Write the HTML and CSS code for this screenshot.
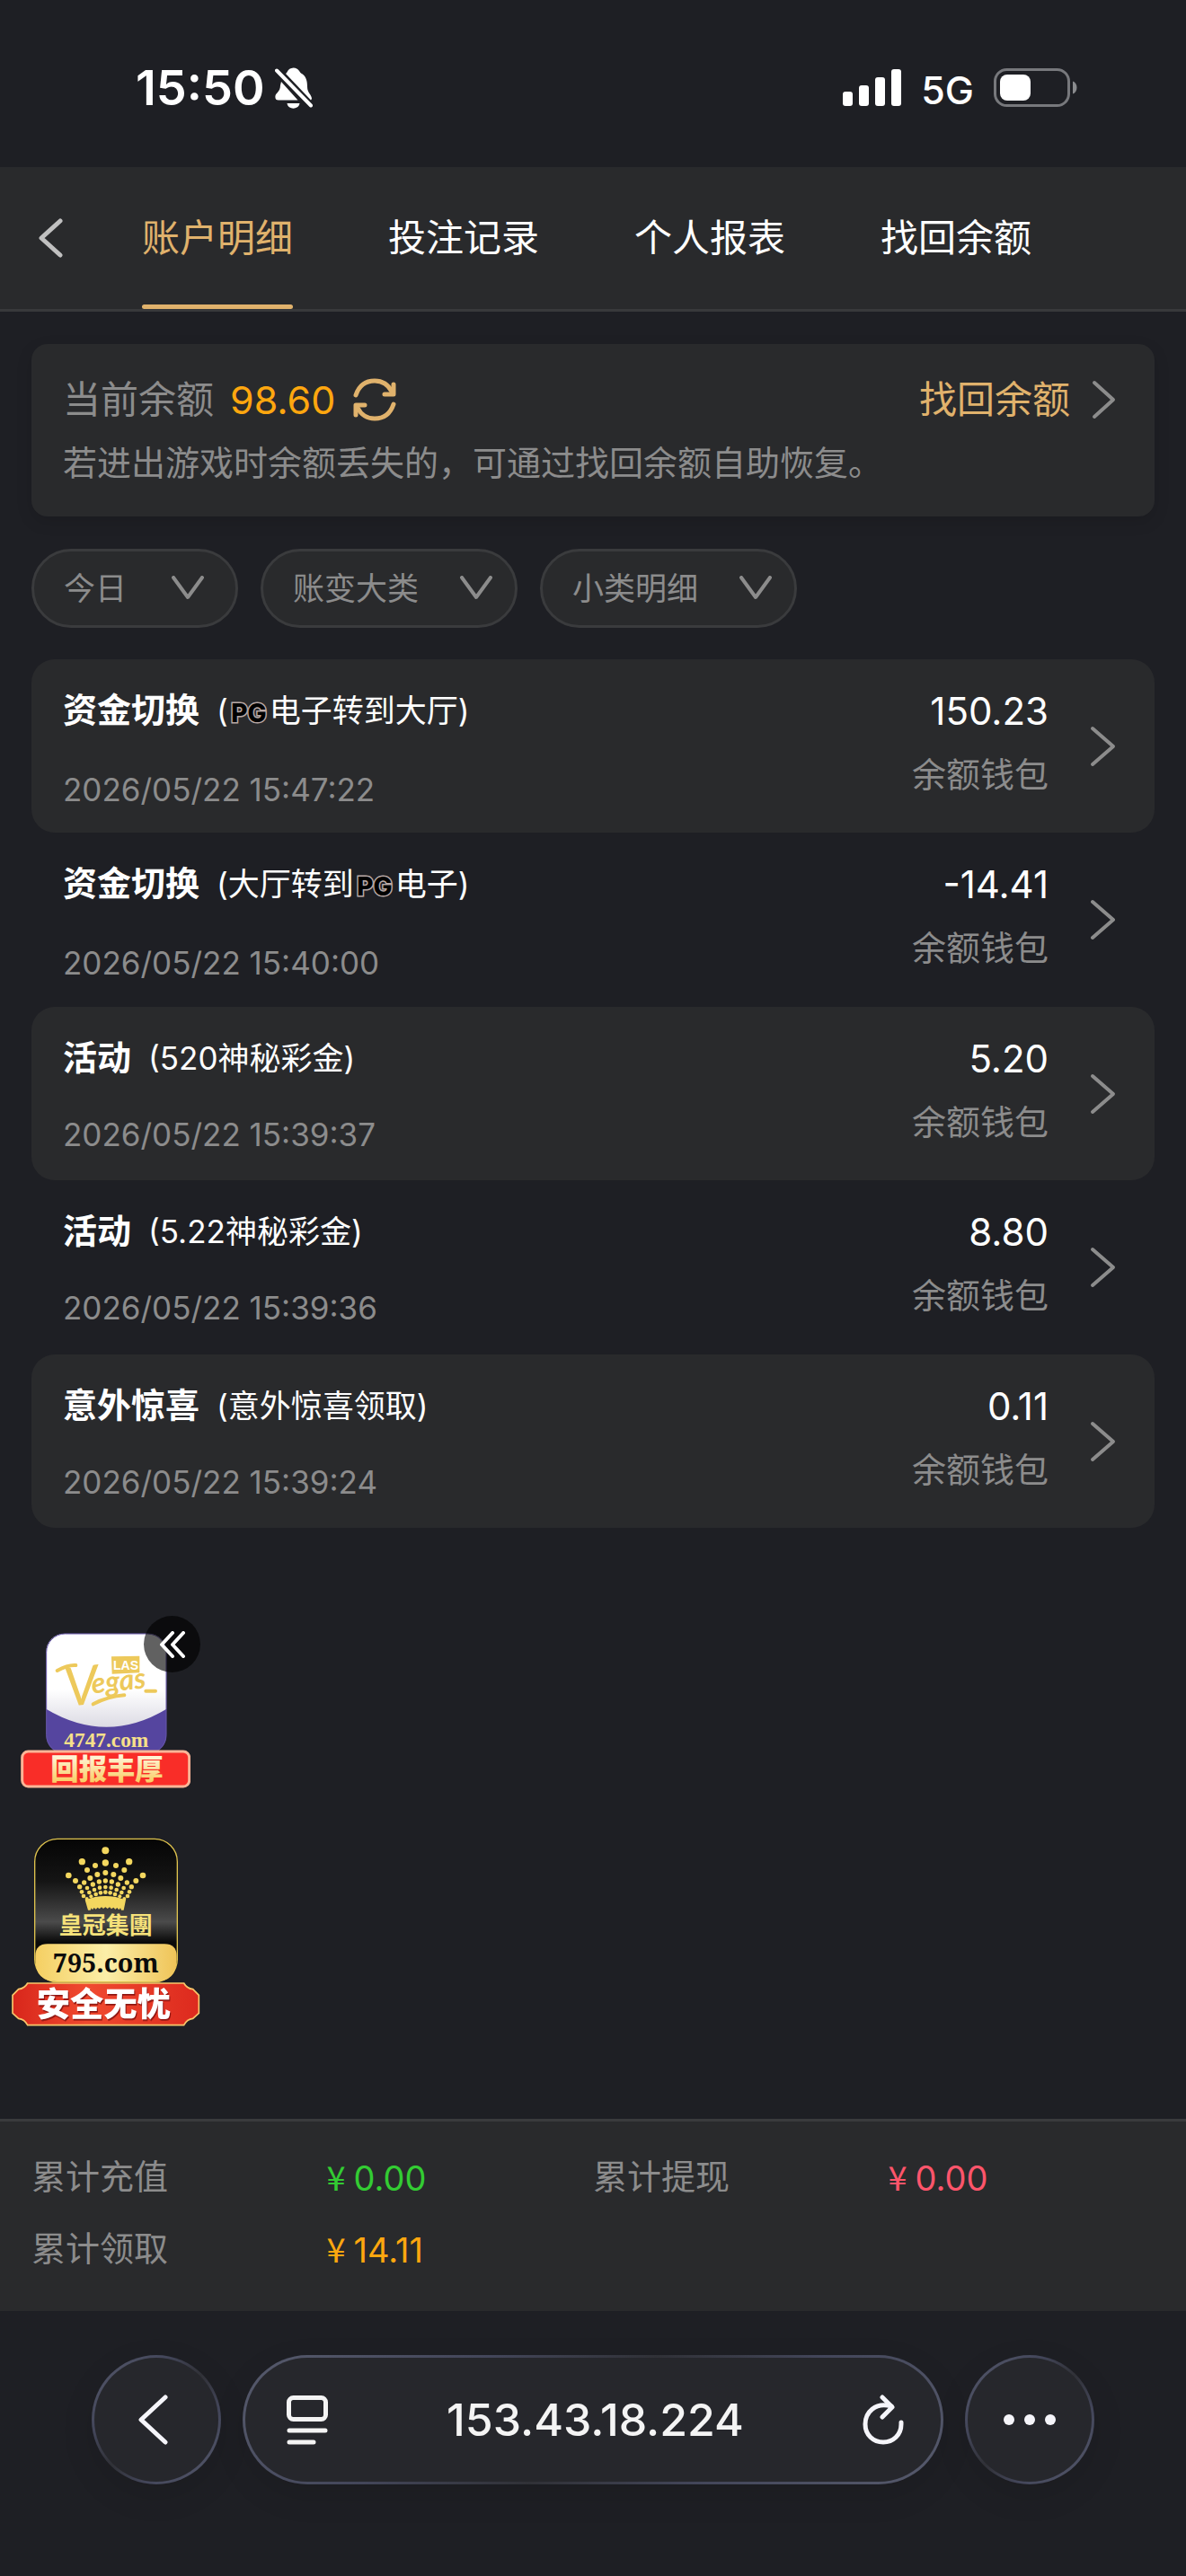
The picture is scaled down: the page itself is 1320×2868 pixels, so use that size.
FILE: index.html
```html
<!DOCTYPE html>
<html lang="zh-CN">
<head>
<meta charset="utf-8">
<meta name="viewport" content="width=device-width, initial-scale=1">
<title>账户明细</title>
<link rel="stylesheet" href="styles.css">
</head>
<body>
<div class="status">
  <span class="status-time">15:50</span>
  <svg class="status-bell" width="42" height="46" viewBox="0 0 42 46" aria-hidden="true">
    <path fill="#fff" d="M12 7c2-1 2-6 8.500-6.500C27 1 27 5 29 6.500c6 3 7 9 7 15 0 7 5 9 5 13.500l-1 1.500zM7 16l18.500 20.500H4c-3 0-4-2-3.500-5C1.500 28 6 27 6 20zM13.500 40h14c-1 7.500-13 7.500-14 0z"/>
    <path d="M2 3.500l38 39" stroke="#fff" stroke-width="4" stroke-linecap="round"/>
  </svg>
  <svg class="status-signal" width="66" height="42" viewBox="0 0 66 42" fill="#fff" aria-hidden="true">
    <rect x="0" y="25" width="11" height="16" rx="3"/><rect x="18" y="18" width="11" height="23" rx="3"/><rect x="36" y="9" width="11" height="32" rx="3"/><rect x="54" y="0" width="11" height="41" rx="3"/>
  </svg>
  <span class="status-net">5G</span>
  <svg width="94" height="44" viewBox="0 0 94 44" aria-hidden="true">
    <rect x="1.500" y="1.500" width="82" height="40" rx="13" fill="none" stroke="#77787c" stroke-width="3"/>
    <rect x="7" y="7" width="34" height="29" rx="8" fill="#fff"/>
    <path d="M88 14.500c6 2 6 12 0 14z" fill="#8a8b8e"/>
  </svg>
</div>

<header class="header">
  <a class="back" href="#" aria-label="返回"><svg width="28" height="44" viewBox="0 0 28 44"><path d="M25 3L4 22l21 19" fill="none" stroke="#c0c0c0" stroke-width="5" stroke-linecap="round" stroke-linejoin="round"/></svg></a>
  <nav class="tabs">
    <a class="tab tab-active" href="#">账户明细</a>
    <a class="tab" href="#">投注记录</a>
    <a class="tab" href="#">个人报表</a>
    <a class="tab" href="#">找回余额</a>
  </nav>
</header>

<main class="content">
  <section class="balance">
    <div class="balance-row">
      <span class="balance-label">当前余额</span>
      <span class="balance-value">98.60</span>
      <button class="refresh" type="button" aria-label="刷新">
        <svg width="48" height="48" viewBox="0 0 48 48" fill="none" stroke="#e0b26c" stroke-width="5" stroke-linecap="round" stroke-linejoin="round"><path d="M3 19C7 7 15 3 24 3c8 0 15 4 19 12"/><path d="M45 7v11H35"/><path d="M45 29c-4 12-12 16-21 16-8 0-15-4-19-12"/><path d="M3 41V30h10"/></svg>
      </button>
      <a class="recover" href="#">找回余额
        <svg width="28" height="44" viewBox="0 0 28 44"><path d="M3 3l21 19L3 41" fill="none" stroke="#8c8c8c" stroke-width="4" stroke-linecap="round" stroke-linejoin="round"/></svg>
      </a>
    </div>
    <p class="balance-note">若进出游戏时余额丢失的，可通过找回余额自助恢复。</p>
  </section>

  <form class="filters">
    <div class="filter filter-date">
      <select aria-label="日期"><option>今日</option></select>
      <svg width="36" height="28" viewBox="0 0 36 28"><path d="M2 2l16 22L34 2"/></svg>
    </div>
    <div class="filter">
      <select aria-label="大类"><option>账变大类</option></select>
      <svg width="36" height="28" viewBox="0 0 36 28"><path d="M2 2l16 22L34 2"/></svg>
    </div>
    <div class="filter">
      <select aria-label="小类"><option>小类明细</option></select>
      <svg width="36" height="28" viewBox="0 0 36 28"><path d="M2 2l16 22L34 2"/></svg>
    </div>
  </form>

  <ul class="records">
    <li><a class="record" href="#">
      <span class="record-main"><span class="record-title"><b>资金切换</b><span>(<i class="pg">PG</i>电子转到大厅)</span></span><time>2026/05/22 15:47:22</time></span>
      <span class="record-side"><span class="amount">150.23</span><span class="wallet">余额钱包</span></span>
      <svg class="go" width="30" height="46" viewBox="0 0 30 46"><path d="M3 3l23 20L3 43"/></svg>
    </a></li>
    <li><a class="record" href="#">
      <span class="record-main"><span class="record-title"><b>资金切换</b><span>(大厅转到<i class="pg">PG</i>电子)</span></span><time>2026/05/22 15:40:00</time></span>
      <span class="record-side"><span class="amount">-14.41</span><span class="wallet">余额钱包</span></span>
      <svg class="go" width="30" height="46" viewBox="0 0 30 46"><path d="M3 3l23 20L3 43"/></svg>
    </a></li>
    <li><a class="record" href="#">
      <span class="record-main"><span class="record-title"><b>活动</b><span>(520神秘彩金)</span></span><time>2026/05/22 15:39:37</time></span>
      <span class="record-side"><span class="amount">5.20</span><span class="wallet">余额钱包</span></span>
      <svg class="go" width="30" height="46" viewBox="0 0 30 46"><path d="M3 3l23 20L3 43"/></svg>
    </a></li>
    <li><a class="record" href="#">
      <span class="record-main"><span class="record-title"><b>活动</b><span>(5.22神秘彩金)</span></span><time>2026/05/22 15:39:36</time></span>
      <span class="record-side"><span class="amount">8.80</span><span class="wallet">余额钱包</span></span>
      <svg class="go" width="30" height="46" viewBox="0 0 30 46"><path d="M3 3l23 20L3 43"/></svg>
    </a></li>
    <li><a class="record" href="#">
      <span class="record-main"><span class="record-title"><b>意外惊喜</b><span>(意外惊喜领取)</span></span><time>2026/05/22 15:39:24</time></span>
      <span class="record-side"><span class="amount">0.11</span><span class="wallet">余额钱包</span></span>
      <svg class="go" width="30" height="46" viewBox="0 0 30 46"><path d="M3 3l23 20L3 43"/></svg>
    </a></li>
  </ul>

  <aside class="promos">
    <a class="promo" href="#">
      <svg width="189" height="173" viewBox="66 116 567 519">
        <defs>
          <linearGradient id="face" x1="0" y1="0" x2="0" y2="1"><stop offset=".6" stop-color="#fff"/><stop offset="1" stop-color="#dcdbe4"/></linearGradient>
          <linearGradient id="cream" x1="0" y1="0" x2="0" y2="1"><stop offset=".2" stop-color="#fff6dc"/><stop offset="1" stop-color="#f8c54e"/></linearGradient>
          <clipPath id="tile"><rect x="151" y="118" width="402" height="402" rx="62"/></clipPath>
        </defs>
        <g clip-path="url(#tile)">
          <rect x="151" y="118" width="402" height="402" fill="#55459f"/>
          <path d="M151 118h402v252q-200 120-402 0z" fill="url(#face)"/>
        </g>
        <rect x="152" y="119" width="400" height="400" rx="62" fill="none" stroke="#6657a8" stroke-width="3"/>
        <path d="M369 195l94-2v56l-92 4z" fill="#edc95b"/>
        <text class="art-las" x="417" y="239" text-anchor="middle">LAS</text>
        <path d="M188 242q36-20 62-18M308 354q50-26 104-30M484 310h32" fill="none" stroke="#edc95b" stroke-width="12" stroke-linecap="round"/>
        <text class="art-vegas" x="218" y="362" transform="rotate(-6 218 362)"><tspan class="art-initial">V</tspan><tspan dy="-34" dx="-22">egas</tspan></text>
        <text class="art-domain" x="352" y="497" text-anchor="middle">4747.com</text>
        <rect x="71" y="512" width="558" height="117" rx="20" fill="#f92d28" stroke="#fbb597" stroke-width="9"/>
        <text class="art-banner" x="354" y="605" text-anchor="middle" fill="url(#cream)">回报丰厚</text>
      </svg>
    </a>
    <button class="collapse" type="button" aria-label="收起"><svg width="30" height="30" viewBox="0 0 30 30"><path d="M15 2L3 15l12 13M27 2L15 15l12 13" fill="none" stroke="#fff" stroke-width="4" stroke-linecap="round" stroke-linejoin="round"/></svg></button>
    <a class="promo" href="#">
      <svg width="211" height="210" viewBox="36 50 633 630">
        <defs>
          <linearGradient id="night" x1="0" y1="0" x2="0" y2="1"><stop offset="0" stop-color="#050505"/><stop offset=".3" stop-color="#151515"/><stop offset=".58" stop-color="#4b4b4b"/><stop offset=".72" stop-color="#0a0a0a"/></linearGradient>
          <linearGradient id="plate" x1="0" y1="0" x2="1" y2="0"><stop offset="0" stop-color="#f5cf62"/><stop offset=".5" stop-color="#fbeea8"/><stop offset="1" stop-color="#efc458"/></linearGradient>
          <linearGradient id="ribbon" x1="0" y1="0" x2="1" y2="0"><stop offset="0" stop-color="#d8261b"/><stop offset=".4" stop-color="#f04a30"/><stop offset="1" stop-color="#dd2a1e"/></linearGradient>
        </defs>
        <rect x="116" y="54" width="476" height="478" rx="76" fill="url(#night)" stroke="#dfc34e" stroke-width="4"/>
        <path d="M118 446q0-41 41-41h390q41 0 41 41v12q0 72-72 72H190q-72 0-72-72z" fill="url(#plate)"/>
        <g fill="#f3d75f">
          <circle cx="352" cy="93" r="12"/><circle cx="274" cy="130" r="11"/><circle cx="431" cy="130" r="11"/><circle cx="352" cy="134" r="11"/>
          <circle cx="318" cy="143" r="9"/><circle cx="387" cy="143" r="9"/><circle cx="291" cy="158" r="9"/><circle cx="415" cy="158" r="9"/>
          <circle cx="229" cy="176" r="10"/><circle cx="477" cy="176" r="10"/><circle cx="352" cy="167" r="9"/><circle cx="325" cy="173" r="9"/><circle cx="379" cy="173" r="9"/>
          <circle cx="301" cy="185" r="9"/><circle cx="403" cy="185" r="9"/><circle cx="252" cy="194" r="9"/><circle cx="454" cy="194" r="9"/>
          <circle cx="352" cy="194" r="8"/><circle cx="331" cy="197" r="8"/><circle cx="373" cy="197" r="8"/><circle cx="310" cy="206" r="8"/><circle cx="394" cy="206" r="8"/><circle cx="281" cy="200" r="8"/><circle cx="424" cy="200" r="8"/><circle cx="266" cy="214" r="8"/><circle cx="439" cy="214" r="8"/>
          <circle cx="352" cy="215" r="7"/><circle cx="333" cy="217" r="7"/><circle cx="371" cy="217" r="7"/><circle cx="315" cy="224" r="7"/><circle cx="389" cy="224" r="7"/><circle cx="291" cy="218" r="7"/><circle cx="413" cy="218" r="7"/><circle cx="273" cy="231" r="7"/><circle cx="432" cy="231" r="7"/><circle cx="298" cy="233" r="7"/><circle cx="406" cy="233" r="7"/>
          <circle cx="352" cy="232" r="7"/><circle cx="336" cy="234" r="7"/><circle cx="368" cy="234" r="7"/><circle cx="320" cy="239" r="7"/><circle cx="384" cy="239" r="7"/><circle cx="279" cy="245" r="7"/><circle cx="426" cy="245" r="7"/><circle cx="304" cy="246" r="6"/><circle cx="400" cy="246" r="6"/><circle cx="290" cy="254" r="6"/><circle cx="415" cy="254" r="6"/>
          <path d="M284 258q68-26 136 0l-7 34h-8l-3-7-5 6-6-7-6 5-6-6-7 5-6-6-7 5-7-5-7 5-6-5-7 6-6-5-6 6-6-5-5 7-4-6-3 7h-8z"/>
        </g>
        <text class="art-crown" x="353" y="371" text-anchor="middle">皇冠集團</text>
        <text class="art-address" x="353" y="499" text-anchor="middle">795.com</text>
        <path d="M92 536h522q10 18 30 20l20 20v60l-20 18q-20 2-30 22H92q-10-20-30-22l-20-18v-60l20-20q20-2 30-20z" fill="url(#ribbon)" stroke="#f8c66a" stroke-width="5"/>
        <text class="art-safe" x="346" y="647" text-anchor="middle">安全无忧</text>
      </svg>
    </a>
  </aside>
</main>

<dl class="summary">
  <dt>累计充值</dt><dd class="green"><span class="yen">¥</span>0.00</dd>
  <dt>累计提现</dt><dd class="red"><span class="yen">¥</span>0.00</dd>
  <dt>累计领取</dt><dd class="orange"><span class="yen">¥</span>14.11</dd>
</dl>

<footer class="browser">
  <button class="glass round" type="button" aria-label="后退"><svg width="42" height="56" viewBox="0 0 42 56"><path d="M31 3L4 28l27 25" fill="none" stroke="#f5f5fa" stroke-width="5" stroke-linecap="round" stroke-linejoin="round"/></svg></button>
  <div class="glass address">
    <button class="plain" type="button" aria-label="页面菜单"><svg width="46" height="56" viewBox="0 0 46 56"><rect x="2.500" y="3.500" width="41" height="24" rx="5" fill="none" stroke="#f4f4f4" stroke-width="5"/><path d="M3 40h40M3 53h27" stroke="#f4f4f4" stroke-width="5" stroke-linecap="round"/></svg></button>
    <input type="text" aria-label="网址" value="153.43.18.224">
    <button class="plain" type="button" aria-label="重新载入"><svg width="46" height="56" viewBox="0 0 46 56" fill="none" stroke="#f5f5fa" stroke-width="5" stroke-linecap="round" stroke-linejoin="round"><path d="M32 13C14 8 3 20 3 33c0 12 9 20 20 20s20-8 20-20v-2"/><path d="M22 3l11 11-11 11"/></svg></button>
  </div>
  <button class="glass round" type="button" aria-label="更多"><svg width="60" height="12" viewBox="0 0 60 12" fill="#f5f5fa"><circle cx="7" cy="6" r="6"/><circle cx="30" cy="6" r="6"/><circle cx="53" cy="6" r="6"/></svg></button>
</footer>
</body>
</html>
```
FILE: styles.css
```css
* { box-sizing: border-box; }

body {
  margin: 0;
  min-height: 100vh;
  display: flex;
  flex-direction: column;
  background: #1e1f24;
  color: #fff;
  font-family: Inter, "Noto Sans CJK SC", sans-serif;
  font-size: 38px;
  line-height: 56px;
}

a { color: inherit; text-decoration: none; }
button { padding: 0; border: 0; background: none; color: inherit; font: inherit; }
svg { display: block; flex: none; }

/* Phone status bar */
.status {
  display: flex;
  align-items: center;
  height: 186px;
  padding: 10px 120px 0 151px;
}
.status-time { font-size: 54px; font-weight: 600; }
.status-bell { margin-left: 11px; }
.status-signal { margin-left: auto; }
.status-net { margin: 4px 22px 0 21px; font-size: 43px; font-weight: 500; }

/* Header with tabs */
.header {
  display: flex;
  height: 161px;
  border-bottom: 3px solid #38393b;
  background: #292a2c;
}
.back { display: flex; align-items: center; width: 158px; padding-left: 42px; }
.tabs { display: flex; gap: 106px; font-size: 42px; }
.tab { display: flex; align-items: center; position: relative; }
.tab-active { color: #e0b26c; }
.tab-active::after {
  content: "";
  position: absolute;
  left: 0;
  right: 0;
  bottom: 0;
  height: 5px;
  border-radius: 3px;
  background: #e0b26c;
}

.content { flex: 1; padding: 36px 35px 0; }

/* Balance card */
.balance {
  height: 192px;
  padding: 34px 42px 0 35px;
  border-radius: 18px;
  background: #292a2c;
  box-shadow: 0 6px 18px rgba(0, 0, 0, .12);
}
.balance-row { display: flex; align-items: center; font-size: 42px; }
.balance-label, .balance-note { color: #8c8c8c; }
.balance-value { margin: 0 20px 0 18px; color: #ffa70f; font-size: 43px; }
.recover { display: flex; align-items: center; gap: 24px; margin-left: auto; color: #e0b26c; }
.balance-note { margin: 14px 0 0; }

/* Filters */
.filters { display: flex; gap: 25px; margin-top: 36px; font-size: 35px; }
.filter { display: grid; align-items: center; }
.filter select, .filter svg { grid-area: 1 / 1; }
.filter select {
  appearance: none;
  height: 88px;
  margin: 0;
  padding: 0 106px 0 33px;
  border: 3px solid #3a3b3d;
  border-radius: 44px;
  background: #292a2c;
  color: #8c8c8c;
  font: inherit;
}
.filter svg {
  justify-self: end;
  margin-right: 28px;
  fill: none;
  stroke: #8c8c8c;
  stroke-width: 4;
  stroke-linecap: round;
  stroke-linejoin: round;
  pointer-events: none;
}
.filter-date select { padding-right: 120px; }
.filter-date svg { margin-right: 38px; }

/* Records */
.records { margin: 35px 0 0; padding: 0; list-style: none; }
.record {
  display: flex;
  align-items: flex-start;
  height: 193px;
  padding: 0 42px 0 35px;
  border-radius: 26px;
}
.records li:nth-child(odd) .record { background: #292a2c; }
.records li:nth-child(even) .record { height: 194px; }
.record-main { display: grid; row-gap: 29px; margin-right: auto; padding-top: 28px; }
.record-title { display: flex; gap: 19px; align-items: baseline; font-size: 35px; }
.record-title b { font-size: 38px; }
.record time { color: #8c8c8c; font-size: 35px; }
.record-side { display: grid; row-gap: 14px; margin-right: 46px; padding-top: 30px; text-align: right; }
.amount { font-size: 42px; }
.wallet { color: #8c8c8c; }
.go {
  align-self: center;
  fill: none;
  stroke: #8c8c8c;
  stroke-width: 4;
  stroke-linecap: round;
  stroke-linejoin: round;
}
.pg {
  display: inline-block;
  width: 46px;
  color: #000;
  font-size: 28px;
  font-style: normal;
  font-weight: 800;
  text-align: center;
  -webkit-text-stroke: 3px #b9a9a6;
  paint-order: stroke fill;
}

/* Floating promotions */
.promos {
  position: relative;
  display: flex;
  flex-direction: column;
  align-items: center;
  gap: 55px;
  width: 211px;
  margin: 117px 0 0 -23px;
}
.collapse {
  position: absolute;
  top: -19px;
  right: 0;
  display: grid;
  place-items: center;
  width: 63px;
  height: 63px;
  border-radius: 50%;
  background: rgba(0, 0, 0, .62);
}
.art-las { fill: #fff; font: 700 42px "Liberation Sans", sans-serif; }
.art-vegas { fill: #edc95b; font: italic 700 96px Lato, sans-serif; }
.art-initial { font-size: 180px; font-weight: 400; }
.art-domain { fill: #f7e08a; font: 700 70px "Liberation Serif", serif; }
.art-banner { font: 900 94px "Noto Sans CJK SC", sans-serif; }
.art-crown { fill: #f6e27a; font: 700 78px "Noto Sans CJK TC", sans-serif; }
.art-address { fill: #0b0b0b; font: 700 86px "Noto Serif", "DejaVu Serif", serif; }
.art-safe {
  fill: #fff;
  font: 900 112px "Noto Sans CJK SC", sans-serif;
  filter: drop-shadow(3px 5px 1px #8d1510);
}

/* Totals */
.summary {
  display: grid;
  grid-template-columns: repeat(4, 1fr);
  row-gap: 22px;
  margin: 0;
  padding: 33px 35px 40px;
  border-top: 3px solid #3a3b3d;
  background: #292a2c;
}
.summary dt { color: #8c8c8c; }
.summary dd { margin: 0; padding-left: 16px; }
.yen { margin-right: 9px; font-family: "Noto Sans CJK SC", sans-serif; }
.green { color: #33cc33; }
.red { color: #ff556b; }
.orange { color: #ffa70f; }

/* Browser toolbar */
.browser { display: flex; gap: 24px; padding: 49px 102px 102px; }
.glass {
  height: 144px;
  border: 3px solid transparent;
  border-radius: 72px;
  background:
    linear-gradient(#26272c, #26272c) padding-box,
    linear-gradient(135deg, #565a6c, #43465a 30%, #303137 50%, #43465a 70%, #565a6c) border-box;
  box-shadow: 0 12px 36px rgba(0, 0, 0, .1);
}
.round { display: grid; flex: none; place-items: center; width: 144px; }
.address { display: flex; flex: 1; align-items: center; min-width: 0; padding: 0 41px 0 46px; }
.address input {
  flex: 1;
  min-width: 0;
  padding: 0;
  border: 0;
  background: none;
  color: #f4f4f4;
  font: 500 50px Inter, sans-serif;
  text-align: center;
}
```
